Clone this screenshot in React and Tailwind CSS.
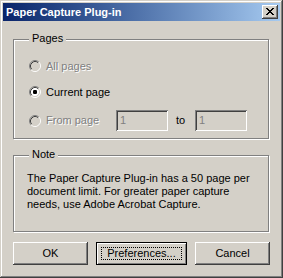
import { useState } from "react";

/* Classic 3D edges */
const raised =
  "shadow-[inset_-1px_-1px_0_#404040,inset_1px_1px_0_#ffffff,inset_-2px_-2px_0_#808080]";

const sunken =
  "shadow-[inset_1px_1px_0_#808080,inset_-1px_-1px_0_#ffffff,inset_2px_2px_0_#404040,inset_-2px_-2px_0_#d4d0c8]";

function Radio({ checked, disabled }) {
  return (
    <svg width="12" height="12" viewBox="0 0 12 12" className="shrink-0">
      <circle cx="6" cy="6" r="4.5" fill={disabled ? "#d4d0c8" : "#ffffff"} />
      <path d="M2.11 9.89 A5.5 5.5 0 0 1 9.89 2.11" fill="none" stroke="#808080" />
      <path d="M2.82 9.18 A4.5 4.5 0 0 1 9.18 2.82" fill="none" stroke="#404040" />
      <path d="M9.89 2.11 A5.5 5.5 0 0 1 2.11 9.89" fill="none" stroke="#ffffff" />
      <path d="M9.18 2.82 A4.5 4.5 0 0 1 2.82 9.18" fill="none" stroke="#d4d0c8" />
      {checked && <rect x="4" y="4" width="4" height="4" rx="1.2" fill="#000000" />}
    </svg>
  );
}

function GroupBox({ title, className, children }) {
  return (
    <div
      className={
        "relative border border-[#808080] shadow-[inset_1px_1px_0_#ffffff,1px_1px_0_#ffffff] " +
        className
      }
    >
      <span className="absolute top-[-8px] left-[15px] px-[3px] bg-[#d4d0c8] leading-[13px]">
        {title}
      </span>
      {children}
    </div>
  );
}

function Button({ children, isDefault, width }) {
  return (
    <button
      className={
        "relative h-[23px] bg-[#d4d0c8] leading-[13px] " +
        width +
        " " +
        (isDefault
          ? "border border-black shadow-[inset_1px_1px_0_#ffffff,inset_-1px_-1px_0_#808080]"
          : raised)
      }
    >
      {children}
      {isDefault && (
        <span className="absolute inset-[4px] border border-dotted border-black"></span>
      )}
    </button>
  );
}

export default function App() {

  const [mode, setMode] = useState("current");

  return (
    <div
      className="w-[283px] h-[278px] p-[3px] bg-[#d4d0c8] text-black text-[11px] shadow-[inset_-1px_-1px_0_#404040,inset_1px_1px_0_#d4d0c8,inset_-2px_-2px_0_#808080,inset_2px_2px_0_#ffffff]"
      style={{ fontFamily: '"Liberation Sans", Arial, sans-serif' }}
    >

      {/* Title bar */}

      <div className="h-[18px] flex items-center pl-[3px] pr-[2px] bg-linear-to-r from-[#0a246a] to-[#a6caf0]">

        <span className="flex-1 text-white font-bold text-[11px] leading-[13px]">
          Paper Capture Plug-in
        </span>

        <div className={"w-[16px] h-[14px] flex items-center justify-center bg-[#d4d0c8] " + raised}>
          <svg width="8" height="7" viewBox="0 0 8 7" className="mt-[-1px]">
            <path
              d="M0 0h2v1h1v1h2v-1h1v-1h2v1h-1v1h-1v1h-1v1h1v1h1v1h1v1h-2v-1h-1v-1h-2v1h-1v1h-2v-1h1v-1h1v-1h1v-1h-1v-1h-1v-1h-1z"
              fill="#000000"
            />
          </svg>
        </div>

      </div>

      {/* Body */}

      <div className="pl-[10px] pt-[18px]">

        {/* Pages */}

        <GroupBox title="Pages" className="w-[256px] h-[100px] pt-[16px] pl-[15px]">

          <div className="h-[20px] flex items-center text-[#808080] [text-shadow:1px_1px_0_#ffffff]" onClick={() => setMode("all")}>
            <Radio disabled />
            <span className="ml-[5px]">All pages</span>
          </div>

          <div className="h-[20px] mt-[6px] flex items-center" onClick={() => setMode("current")}>
            <Radio checked={mode === "current"} />
            <span className="ml-[5px]">Current page</span>
          </div>

          <div className="h-[21px] mt-[8px] flex items-center">
            <Radio disabled />
            <span className="ml-[5px] w-[70px] text-[#808080] [text-shadow:1px_1px_0_#ffffff]">
              From page
            </span>
            <div className={"w-[52px] h-[21px] pl-[4px] flex items-center text-[#808080] " + sunken}>
              1
            </div>
            <span className="w-[27px] pl-[8px]">to</span>
            <div className={"w-[52px] h-[21px] pl-[4px] flex items-center text-[#808080] " + sunken}>
              1
            </div>
          </div>

        </GroupBox>

        {/* Note */}

        <GroupBox title="Note" className="w-[256px] h-[77px] mt-[16px] pt-[16px] pl-[13px] pr-[8px]">

          <p className="leading-[13px]">
            The Paper Capture Plug-in has a 50 page per document limit. For greater paper capture needs, use Adobe Acrobat Capture.
          </p>

        </GroupBox>

        {/* Buttons */}

        <div className="flex gap-[8px] mt-[10px]">
          <Button width="w-[75px]">OK</Button>
          <Button width="w-[91px]" isDefault>Preferences...</Button>
          <Button width="w-[75px]">Cancel</Button>
        </div>

      </div>

    </div>
  );
}
